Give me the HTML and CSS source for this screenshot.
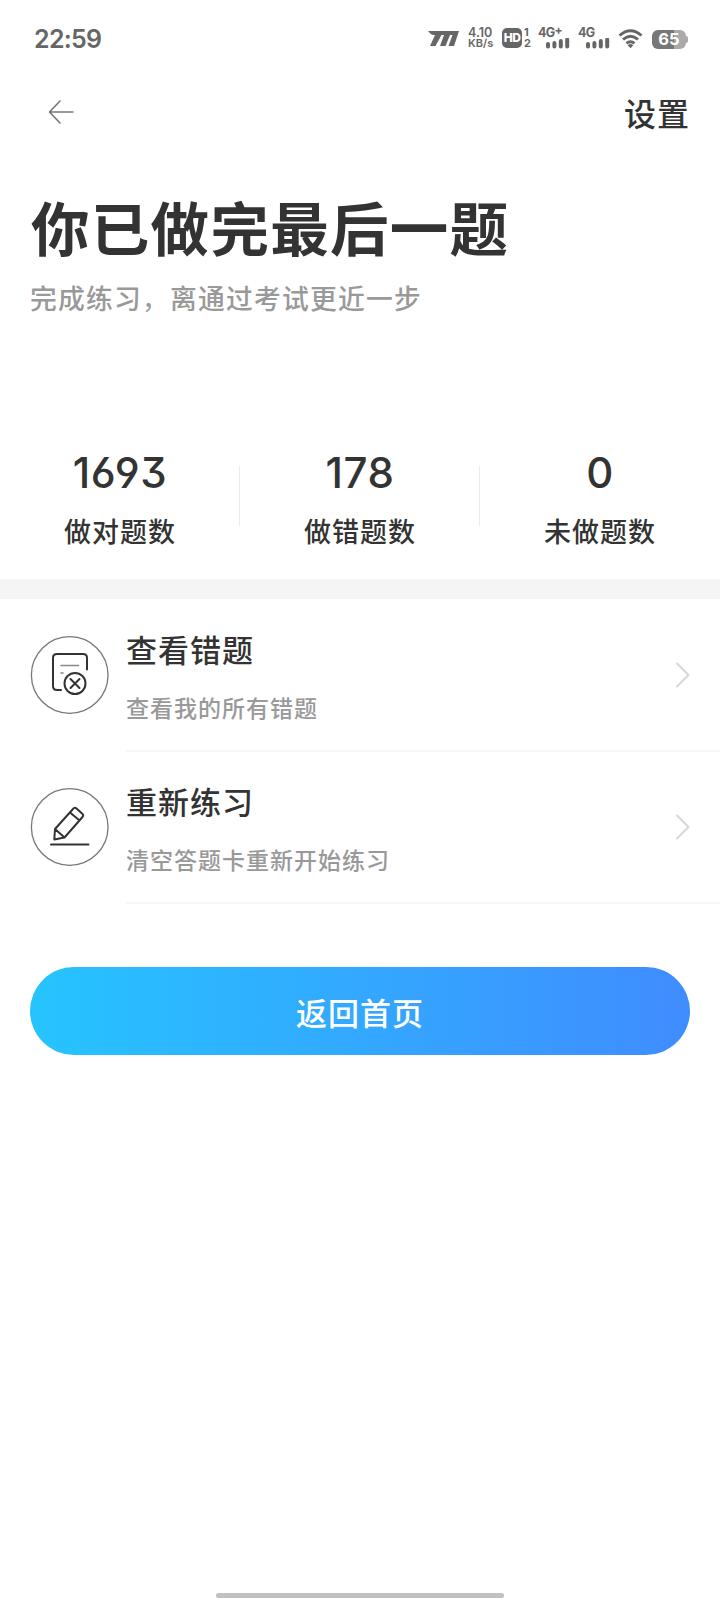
FILE: index.html
```
<!DOCTYPE html>
<html lang="zh-CN">
<head>
<meta charset="utf-8">
<title>练习完成</title>
<link rel="stylesheet" href="styles.css">
</head>
<body>
<div class="screen">
  <header class="status">
    <span class="clock">22:59</span>
    <svg class="brand" width="32" height="15" viewBox="0 0 32 15"><path d="M0 0H31L26 15H20.500L24.500 4H22L17.500 15H12L16 4H13.500L7.500 15H2L7 4H5Q2.500 3.500 0 0Z"/></svg>
    <span class="speed"><span>4.10</span><span>KB/s</span></span>
    <span class="hd">HD</span>
    <span class="sims"><span>1</span><span>2</span></span>
    <span class="signal"><span class="net">4G<sup>+</sup></span><svg width="24" height="11" viewBox="0 0 24 11"><path d="M2 6V8.500M8.400 5V8.500M14.800 3V8.500M21.200 1.500V8.500"/></svg></span>
    <span class="signal second"><span class="net">4G</span><svg width="24" height="11" viewBox="0 0 24 11"><path d="M2 6V8.500M8.400 5V8.500M14.800 3V8.500M21.200 1.500V8.500"/></svg></span>
    <svg class="wifi" width="25" height="20" viewBox="0 0 25 20"><path d="M1.500 6.500Q12.500-3 23.500 6.500M5 10.500Q12.500 4 20 10.500M8.500 14.300Q12.500 11 16.500 14.300"/><path class="dot" d="M9.700 16.200Q12.500 14 15.300 16.200L12.500 19.200Z"/></svg>
    <span class="battery">65</span>
  </header>
  <nav class="nav">
    <svg width="26" height="24" viewBox="0 0 26 24"><path d="M12 1L1.500 12L12 23M1.500 12H25"/></svg>
    <a class="settings">设置</a>
  </nav>
  <section class="hero">
    <h1>你已做完最后一题</h1>
    <p>完成练习<span class="comma">，</span>离通过考试更近一步</p>
  </section>
  <section class="stats">
    <div class="stat"><b>1693</b><span>做对题数</span></div>
    <div class="stat"><b>178</b><span>做错题数</span></div>
    <div class="stat"><b>0</b><span>未做题数</span></div>
  </section>
  <ul class="list">
    <li class="row">
      <svg class="icon" width="80" height="80" viewBox="0 0 80 80"><circle class="ring" cx="39.700" cy="40" r="38.300"/><path d="M57 34.500V23Q57 19 53 19H27Q23 19 23 23V51Q23 55 27 55H31"/><path class="thin" d="M31 30.500H48.500M31 38H33"/><circle cx="45" cy="48.500" r="10.500"/><path d="M40.500 44L49.500 53M49.500 44L40.500 53"/></svg>
      <div class="body"><div class="text"><h2>查看错题</h2><p>查看我的所有错题</p></div>
      <svg class="chevron" width="14" height="26" viewBox="0 0 14 26"><path d="M1 1.500L12.500 13L1 24.500"/></svg></div>
    </li>
    <li class="row">
      <svg class="icon" width="80" height="80" viewBox="0 0 80 80"><circle class="ring" cx="39.700" cy="40" r="38.300"/><path d="M21 57.500H58.500"/><path d="M25 42L43 22Q44.500 20 46.500 21.500L52 26.500Q54 28 52.500 30L34.500 50.500L24.300 52.500ZM25 42L34.500 50.500M40 25.500L49 33"/></svg>
      <div class="body"><div class="text"><h2>重新练习</h2><p>清空答题卡重新开始练习</p></div>
      <svg class="chevron" width="14" height="26" viewBox="0 0 14 26"><path d="M1 1.500L12.500 13L1 24.500"/></svg></div>
    </li>
  </ul>
  <button class="home">返回首页</button>
  <div class="handle"></div>
</div>
</body>
</html>
```

FILE: styles.css
```
* { box-sizing: border-box; margin: 0; padding: 0; }
body { background: #fff; font-family: "Noto Sans CJK SC", sans-serif; color: #333; }
svg { fill: none; flex: none; stroke-linecap: round; stroke-linejoin: round; }
.screen { width: 720px; height: 1600px; display: flex; flex-direction: column; overflow: hidden; background: #fff; }

.status { height: 76px; padding: 0 32px 0 34px; display: flex; align-items: center; color: #666; font-family: Inter, sans-serif; }
.clock { font-size: 25px; font-weight: 600; line-height: 30px; letter-spacing: -0.7px; margin-top: 2px; }
.brand { margin-left: auto; fill: #666; }
.speed { width: 26px; margin-left: 8px; display: flex; flex-direction: column; font-size: 11px; line-height: 11px; font-weight: 600; }
.speed span:first-child { font-size: 12.500px; }
.hd { width: 20px; height: 20px; margin-left: 8px; border-radius: 5px; background: #666; color: #fff; font-size: 12px; line-height: 20px; font-weight: 800; text-align: center; letter-spacing: -0.6px; }
.sims { margin-left: 2px; width: 7px; display: flex; flex-direction: column; font-size: 11px; line-height: 11px; font-weight: 700; }
.signal { width: 32px; height: 22px; margin-left: 7px; display: flex; flex-direction: column; align-items: flex-end; }
.signal.second { margin-left: 8px; }
.signal svg { stroke: #666; stroke-width: 4; }
.net { align-self: flex-start; display: flex; height: 11px; font-size: 12.500px; line-height: 11px; font-weight: 700; letter-spacing: -0.7px; }
.net sup { font-size: 12px; line-height: 6px; }
.wifi { margin-left: 8px; margin-top: 1px; stroke: #666; stroke-width: 2.900; stroke-linecap: butt; }
.wifi .dot { fill: #666; stroke: none; }
.battery { width: 34px; height: 19px; margin-left: 9px; margin-right: 2px; margin-top: 2px; border-radius: 6px; background: linear-gradient(90deg, #777 65%, #aaa 65%); color: #fff; font-size: 16.500px; line-height: 19px; font-weight: 700; text-align: center; position: relative; }
.battery::after { content: ""; position: absolute; right: -2px; top: 6px; width: 2px; height: 7px; border-radius: 0 2px 2px 0; background: #aaa; }

.nav { height: 74px; padding: 0 30px 0 48px; display: flex; align-items: center; justify-content: space-between; }
.nav svg { margin-top: -2px; stroke: #777; stroke-width: 1.600; }
.settings { margin-top: -3px; font-size: 32px; line-height: 40px; font-weight: 500; letter-spacing: 1px; }

.hero { height: 279px; padding: 41px 0 0 31px; }
.hero h1 { font-size: 58.500px; letter-spacing: 1.300px; line-height: 70px; font-weight: 700; }
.hero p { margin-top: 17px; font-size: 26.800px; letter-spacing: 1.200px; line-height: 40px; font-weight: 500; color: #999; margin-left: -1px; }
.comma { font-weight: 400; }

.stats { height: 150px; display: grid; grid-template-columns: 1fr 1fr 1fr; }
.stat { position: relative; padding-top: 20px; display: flex; flex-direction: column; align-items: center; }
.stat b { font-family: Inter, sans-serif; font-feature-settings: "ss01"; font-size: 42px; line-height: 48px; font-weight: 500; letter-spacing: 0.600px; }
.stat span { margin-top: 14px; font-size: 27px; letter-spacing: 1px; line-height: 40px; font-weight: 500; }
.stat:not(:last-child)::after { content: ""; position: absolute; right: 0; top: 37px; width: 1px; height: 60px; background: #ebebeb; }

.list { list-style: none; border-top: 20px solid #f5f5f5; }
.row { height: 152px; padding-left: 30px; display: flex; }
.row .icon { margin-top: 36px; stroke: #333; stroke-width: 2; }
.icon .ring { stroke: #777; stroke-width: 1.300; }
.icon .thin { stroke: #888; stroke-width: 1.600; }
.body { flex: 1; height: 153px; margin-left: 16px; padding-right: 30px; display: flex; justify-content: space-between; border-bottom: 2px solid #f6f6f6; }
.text h2 { margin-top: 30px; font-size: 31px; letter-spacing: 1px; line-height: 40px; font-weight: 500; }
.text p { margin-top: 19px; font-size: 23px; letter-spacing: 1px; line-height: 38px; font-weight: 500; color: #999; }
.chevron { margin-top: 63px; stroke: #d6d6d6; stroke-width: 1.900; }

.home { width: 660px; height: 88px; margin: 64px auto 0; padding-top: 1px; border: 0; border-radius: 44px; background: linear-gradient(90deg, #26c4ff, #408cff); color: #fff; font: 500 31px/40px "Noto Sans CJK SC", sans-serif; letter-spacing: 1px; }
.handle { width: 288px; height: 5px; margin: auto auto 2px; border-radius: 3px; background: #c1c1c1; }
```
